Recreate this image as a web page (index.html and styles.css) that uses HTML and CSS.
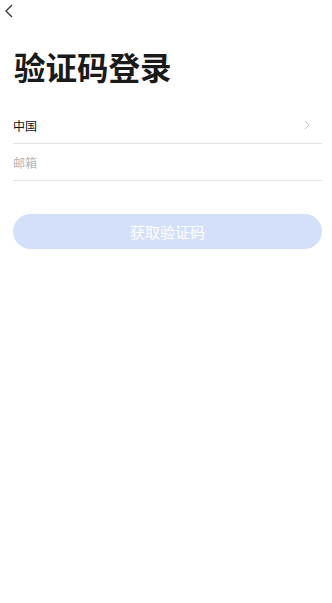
FILE: index.html
```html
<!DOCTYPE html>
<html lang="zh-CN">

<head>
    <meta charset="UTF-8" />
    <meta name="viewport" content="width=device-width, initial-scale=1" />
    <title>验证码登录</title>
    <link rel="stylesheet" href="styles.css">
</head>

<body>
    <!-- Top bar -->
    <header class="topbar">
        <svg class="back" width="10" height="14" viewBox="0 0 10 14">
            <path d="M8 1 L2 7 L8 13" fill="none" stroke="#333" stroke-width="1.3" />
        </svg>
    </header>

    <main class="page">
        <h1 class="title">验证码登录</h1>

        <div class="field">
            <span class="value">中国</span>
            <svg class="arrow" width="6" height="10" viewBox="0 0 6 10">
                <path d="M1 1 L5 5 L1 9" fill="none" stroke="#c4c4c4" stroke-width="1" />
            </svg>
        </div>
        <div class="field">
            <input class="input" type="text" placeholder="邮箱">
        </div>

        <button class="submit" disabled>获取验证码</button>
    </main>
</body>

</html>
```

FILE: styles.css
```css
/* Reset */
* {
    margin: 0;
    padding: 0;
    box-sizing: border-box;
}

body {
    background: #fff;
    font-family: "Noto Sans CJK SC", "Noto Sans", sans-serif;
    color: #111;
}

.topbar {
    height: 24px;
    padding: 4px 0 0 4px;
}

.back {
    display: block;
}

.page {
    padding: 0 10px 0 13px;
}

.title {
    font-size: 31.5px;
    font-weight: 700;
    line-height: 44px;
    margin-top: 20px;
    margin-left: 1px;
    color: #1a1a1a;
}

.field {
    display: flex;
    align-items: center;
    justify-content: space-between;
    height: 37px;
    border-bottom: 1px solid #e4e4e4;
}

.field:first-of-type {
    margin-top: 19px;
}

.value {
    font-size: 12px;
    color: #111;
}

.arrow {
    margin-right: 12px;
}

.input {
    border: none;
    outline: none;
    font-family: inherit;
    font-size: 12px;
    width: 100%;
    background: transparent;
}

.input::placeholder {
    color: #b5b5b5;
}

.submit {
    display: block;
    width: 100%;
    height: 35px;
    margin-top: 33px;
    border: none;
    border-radius: 18px;
    background: #d4e0f9;
    color: #fff;
    font-family: inherit;
    font-size: 15px;
}
```
